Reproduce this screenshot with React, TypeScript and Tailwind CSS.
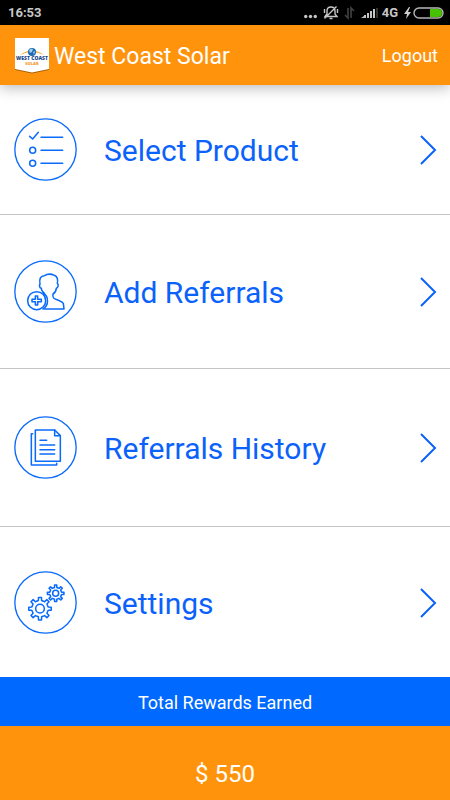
import type { ReactNode } from "react";

function gearPath(cx: number, cy: number, outer: number, inner: number, teeth: number) {
  const step = (Math.PI * 2) / teeth;
  const points: string[] = [];
  for (let i = 0; i < teeth; i++) {
    const a = i * step - Math.PI / 2;
    const corners: [number, number][] = [
      [inner, -0.25],
      [outer, -0.17],
      [outer, 0.17],
      [inner, 0.25],
    ];
    for (const [r, t] of corners) {
      points.push(`${(cx + r * Math.cos(a + t * step)).toFixed(1)} ${(cy + r * Math.sin(a + t * step)).toFixed(1)}`);
    }
  }
  return `M${points.join("L")}Z`;
}

function RoundIcon({ children }: { children: ReactNode }) {
  return (
    <svg
      aria-hidden="true"
      viewBox="27 24 189 189"
      className="size-[63px] shrink-0"
      fill="none"
      stroke="#0a6bfb"
      strokeWidth="4.6"
      strokeLinecap="round"
      strokeLinejoin="round"
    >
      <circle cx="121.5" cy="118.5" r="92" strokeWidth="4" />
      {children}
    </svg>
  );
}

const items = [
  {
    label: "Select Product",
    space: "py-[33px]",
    icon: (
      <>
        <path d="M74 79L83 87L100 67" />
        <path d="M108 82H173M108 121H173M108 160H173" />
        <circle cx="83" cy="121" r="9" />
        <circle cx="83" cy="160" r="9" />
      </>
    ),
  },
  {
    label: "Add Referrals",
    space: "py-[45px]",
    icon: (
      <>
        <path d="M117 130C119 125 117 122 113 119C110 116 109 113 109 109C104 108 102 101 105 96C102 80 107 72 118 71C128 65 140 66 148 70C158 74 159 84 157 94C162 98 159 107 154 109C153 117 149 123 144 126C143 130 142 134 146 138C155 145 170 146 175 154L177 171H119" />
        <circle cx="95" cy="146" r="27" />
        <path d="M114 121C132 134 132 160 114 171" />
        <path d="M91 132H98V142H109V149H98V159H91V149H81V142H91Z" />
      </>
    ),
  },
  {
    label: "Referrals History",
    space: "py-[47px]",
    icon: (
      <>
        <path d="M91 66H149L166 83V160H91Z" />
        <path d="M149 66V83H166" />
        <path d="M83 77H79V171H155V166" />
        <path d="M105 97H125M105 111H149M105 125H149M105 138H149" />
      </>
    ),
  },
  {
    label: "Settings",
    space: "pt-11 pb-[43px]",
    icon: (
      <>
        <path d={gearPath(105, 137, 34, 25, 8)} />
        <circle cx="105" cy="137" r="13" />
        <path d={gearPath(152, 91, 25, 18, 8)} />
        <circle cx="152" cy="91" r="9" />
      </>
    ),
  },
];

function StatusBar() {
  return (
    <div className="flex h-[25px] items-center justify-between bg-black pr-[6px] pl-2 text-[13px] font-bold text-[#c8c8c8]">
      <span>16:53</span>
      <div className="flex items-center">
        <svg aria-hidden="true" viewBox="0 0 74 20" className="h-5 w-[74px]" fill="none" stroke="#c8c8c8">
          <g fill="#c8c8c8" stroke="none">
            <circle cx="1.7" cy="13.5" r="1.7" />
            <circle cx="6.5" cy="13.5" r="1.7" />
            <circle cx="11.3" cy="13.5" r="1.7" />
          </g>
          <path d="M21 13.5L23 11V8C23 5 25 4 27 4C30 4 31 6 31 8V11L33 13.5ZM25.5 15.5H28.5M32.5 3.5L20.5 15.5M20.5 6V10M33.5 6V10" strokeWidth="1.4" />
          <path d="M44 5V15L41 12M47 15V5L50 8" stroke="#444" strokeWidth="1.6" />
          <g fill="#c8c8c8" stroke="none">
            <path d="M57 15L60 13V15Z" />
            <path d="M60 12H62V15H60ZM63 10H65V15H63ZM66 8H68V15H66Z" />
            <path d="M69 6H71V15H69Z" />
          </g>
          <path d="M72 5H74V15H72Z" fill="#333" stroke="none" />
        </svg>
        <span className="ml-1">4G</span>
        <svg aria-hidden="true" viewBox="0 0 42 20" className="ml-1 h-5 w-[42px]">
          <path d="M7 4L2 11H5L4 16L9 9H6L8 4Z" fill="#d0d0d0" />
          <rect x="12" y="5" width="29" height="10" rx="5" fill="none" stroke="#b8b8b8" strokeWidth="1.4" />
          <path d="M28 6H36Q40 6 40 10Q40 14 36 14H28Z" fill="#49c400" />
        </svg>
      </div>
    </div>
  );
}

function Logo() {
  return (
    <svg role="img" aria-label="West Coast Solar logo" viewBox="0 0 34 36" className="h-9 w-[34px] shrink-0">
      <path d="M0 1H34V32L17 35.5L0 32Z" fill="#a86208" />
      <path d="M0 0H34V31L17 34.5L0 31Z" fill="#fff" />
      <path d="M5 17Q17 8 29 17Q17 11 5 17Z" fill="#f6a02d" />
      <circle cx="17" cy="14" r="4" fill="#1c69b0" />
      <path d="M14 12Q16 10 18 11L17 14L15 15ZM18 14L20 13L19 17Z" fill="#9bd0ee" />
      <text x="17" y="22" textAnchor="middle" fontSize="5" fontWeight="800" fill="#17478c" fontFamily="Open Sans, sans-serif">
        WEST COAST
      </text>
      <text x="17" y="27" textAnchor="middle" fontSize="4" fontWeight="800" fill="#f39a2b" fontFamily="Open Sans, sans-serif">
        SOLAR
      </text>
    </svg>
  );
}

export default function App() {
  return (
    <div className="flex min-h-screen flex-col bg-white font-[Roboto,sans-serif]">
      <StatusBar />
      <header className="flex h-[60px] items-center justify-between bg-[#ff930b] pt-[2px] pr-3 pl-[15px] text-white shadow-[0_2px_14px_rgba(0,0,0,0.3)]">
        <div className="flex items-center gap-[5px]">
          <Logo />
          <h1 className="pt-[2px] text-[23px] leading-7">West Coast Solar</h1>
        </div>
        <button type="button" className="text-[18px] leading-6">
          Logout
        </button>
      </header>
      <nav className="flex-1">
        <ul className="divide-y divide-[#c4c4c4]">
          {items.map((item) => (
            <li key={item.label}>
              <a href="#" className={`flex items-center pr-[13px] pl-[14px] text-[#0a62fb] ${item.space}`}>
                <RoundIcon>{item.icon}</RoundIcon>
                <span className="ml-[27px] flex-1 pt-[3px] text-[30px] leading-9">{item.label}</span>
                <svg aria-hidden="true" viewBox="0 0 18 30" className="h-[30px] w-[18px]" fill="none" stroke="currentColor" strokeWidth="2">
                  <path d="M2 1L16 15L2 29" />
                </svg>
              </a>
            </li>
          ))}
        </ul>
      </nav>
      <footer className="text-center text-white">
        <p className="bg-[#0069ff] pt-[14px] pb-[11px] text-[18px] leading-6">Total Rewards Earned</p>
        <p className="bg-[#ff930b] pt-[34px] pb-[12px] text-[24px] leading-7">$ 550</p>
      </footer>
    </div>
  );
}
